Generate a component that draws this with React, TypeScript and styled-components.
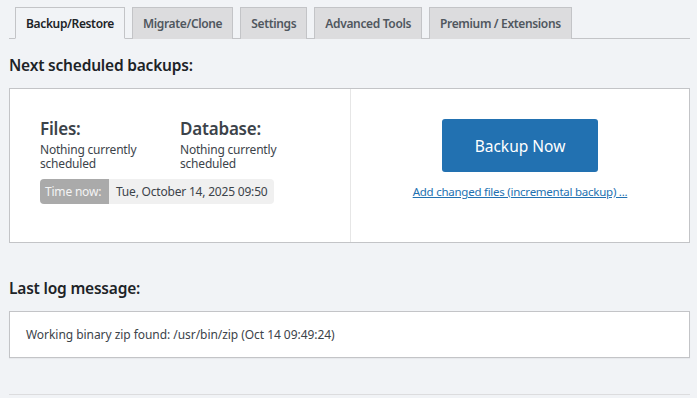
import React from "react";
import styled, { createGlobalStyle } from "styled-components";

const Global = createGlobalStyle`
  html, body { margin: 0; padding: 0; }
  body {
    background: #f1f3f6;
    font-family: "Noto Sans", "Open Sans", sans-serif;
    color: #3c434a;
    width: 697px;
    height: 398px;
    overflow: hidden;
  }
  * { box-sizing: border-box; }
`;

const Page = styled.div`
  width: 690px;
  padding: 7px 0 0 9px;
`;

const TabBar = styled.nav`
  display: flex;
  gap: 7px;
  padding-left: 6px;
  border-bottom: 1px solid #c3c4c7;
  height: 32px;
`;

const Tab = styled.a<{ $active?: boolean }>`
  display: flex;
  align-items: center;
  height: 32px;
  padding: 0 10px;
  font-size: 12px;
  font-weight: 600;
  color: ${(p) => (p.$active ? "#1d2327" : "#50575e")};
  background: ${(p) => (p.$active ? "#f1f3f6" : "#dcdcde")};
  border: 1px solid #c3c4c7;
  border-bottom: ${(p) => (p.$active ? "1px solid #f1f3f6" : "none")};
  white-space: nowrap;
  letter-spacing: -0.35px;
`;

const Heading = styled.h2`
  margin: 0;
  font-size: 15.5px;
  font-weight: 600;
  color: #1d2327;
  line-height: 20px;
  letter-spacing: -0.2px;
`;

const NextHeading = styled(Heading)`
  margin-top: 16px;
`;

const LogHeading = styled(Heading)`
  margin-top: 35px;
`;

const Card = styled.div`
  display: grid;
  grid-template-columns: 341px 1fr;
  margin-top: 13px;
  height: 155px;
  background: #fff;
  border: 1px solid #c3c4c7;
`;

const LeftCol = styled.div`
  display: flex;
  flex-direction: column;
  justify-content: center;
  padding: 0 0 10px 30px;
  border-right: 1px solid #e6e6e6;
`;

const Columns = styled.div`
  display: grid;
  grid-template-columns: 140px 140px;
`;

const ColTitle = styled.div`
  font-size: 17px;
  font-weight: 600;
  color: #3c434a;
  line-height: 22px;
  letter-spacing: -0.2px;
`;

const ColText = styled.div`
  margin-top: 3px;
  font-size: 12px;
  line-height: 14px;
  color: #3c434a;
  letter-spacing: -0.2px;
`;

const TimeBox = styled.div`
  display: flex;
  align-self: flex-start;
  margin-top: 8px;
  height: 25px;
  border-radius: 4px;
  overflow: hidden;
  font-size: 12px;
  letter-spacing: -0.2px;
`;

const TimeLabel = styled.span`
  display: flex;
  align-items: center;
  padding: 0 5px;
  width: 69px;
  background: #aaaaaa;
  color: #f4f4f4;
`;

const TimeValue = styled.span`
  display: flex;
  align-items: center;
  padding: 0 7px;
  background: #f0f0f0;
  color: #3c434a;
`;

const RightCol = styled.div`
  display: flex;
  flex-direction: column;
  align-items: center;
  padding-top: 30px;
`;

const BigButton = styled.button`
  width: 156px;
  height: 53px;
  border: none;
  border-radius: 3px;
  background: #2271b1;
  color: #fff;
  font-family: inherit;
  font-size: 15.5px;
  cursor: pointer;
`;

const IncLink = styled.a`
  margin-top: 12px;
  font-size: 11.5px;
  color: #2271b1;
  text-decoration: underline;
  letter-spacing: -0.25px;
`;

const LogBox = styled.div`
  display: flex;
  align-items: center;
  margin-top: 13px;
  height: 47px;
  padding: 0 16px;
  background: #fff;
  border: 1px solid #c3c4c7;
  box-shadow: 0 1px 1px rgba(0, 0, 0, 0.04);
  font-size: 12px;
  color: #3c434a;
  letter-spacing: -0.05px;
`;

const Rule = styled.hr`
  margin: 36px 0 0;
  border: none;
  border-top: 1px solid #dcdcde;
`;

const tabs = [
  "Backup/Restore",
  "Migrate/Clone",
  "Settings",
  "Advanced Tools",
  "Premium / Extensions",
];

export default function App() {
  return (
    <>
      <Global />
      <Page>
        <TabBar>
          {tabs.map((t, i) => (
            <Tab key={t} $active={i === 0}>
              {t}
            </Tab>
          ))}
        </TabBar>
        <NextHeading>Next scheduled backups:</NextHeading>
        <Card>
          <LeftCol>
            <Columns>
              <div>
                <ColTitle>Files:</ColTitle>
                <ColText>
                  Nothing currently
                  <br />
                  scheduled
                </ColText>
              </div>
              <div>
                <ColTitle>Database:</ColTitle>
                <ColText>
                  Nothing currently
                  <br />
                  scheduled
                </ColText>
              </div>
            </Columns>
            <TimeBox>
              <TimeLabel>Time now:</TimeLabel>
              <TimeValue>Tue, October 14, 2025 09:50</TimeValue>
            </TimeBox>
          </LeftCol>
          <RightCol>
            <BigButton>Backup Now</BigButton>
            <IncLink href="#">Add changed files (incremental backup) ...</IncLink>
          </RightCol>
        </Card>
        <LogHeading>Last log message:</LogHeading>
        <LogBox>Working binary zip found: /usr/bin/zip (Oct 14 09:49:24)</LogBox>
        <Rule />
      </Page>
    </>
  );
}
